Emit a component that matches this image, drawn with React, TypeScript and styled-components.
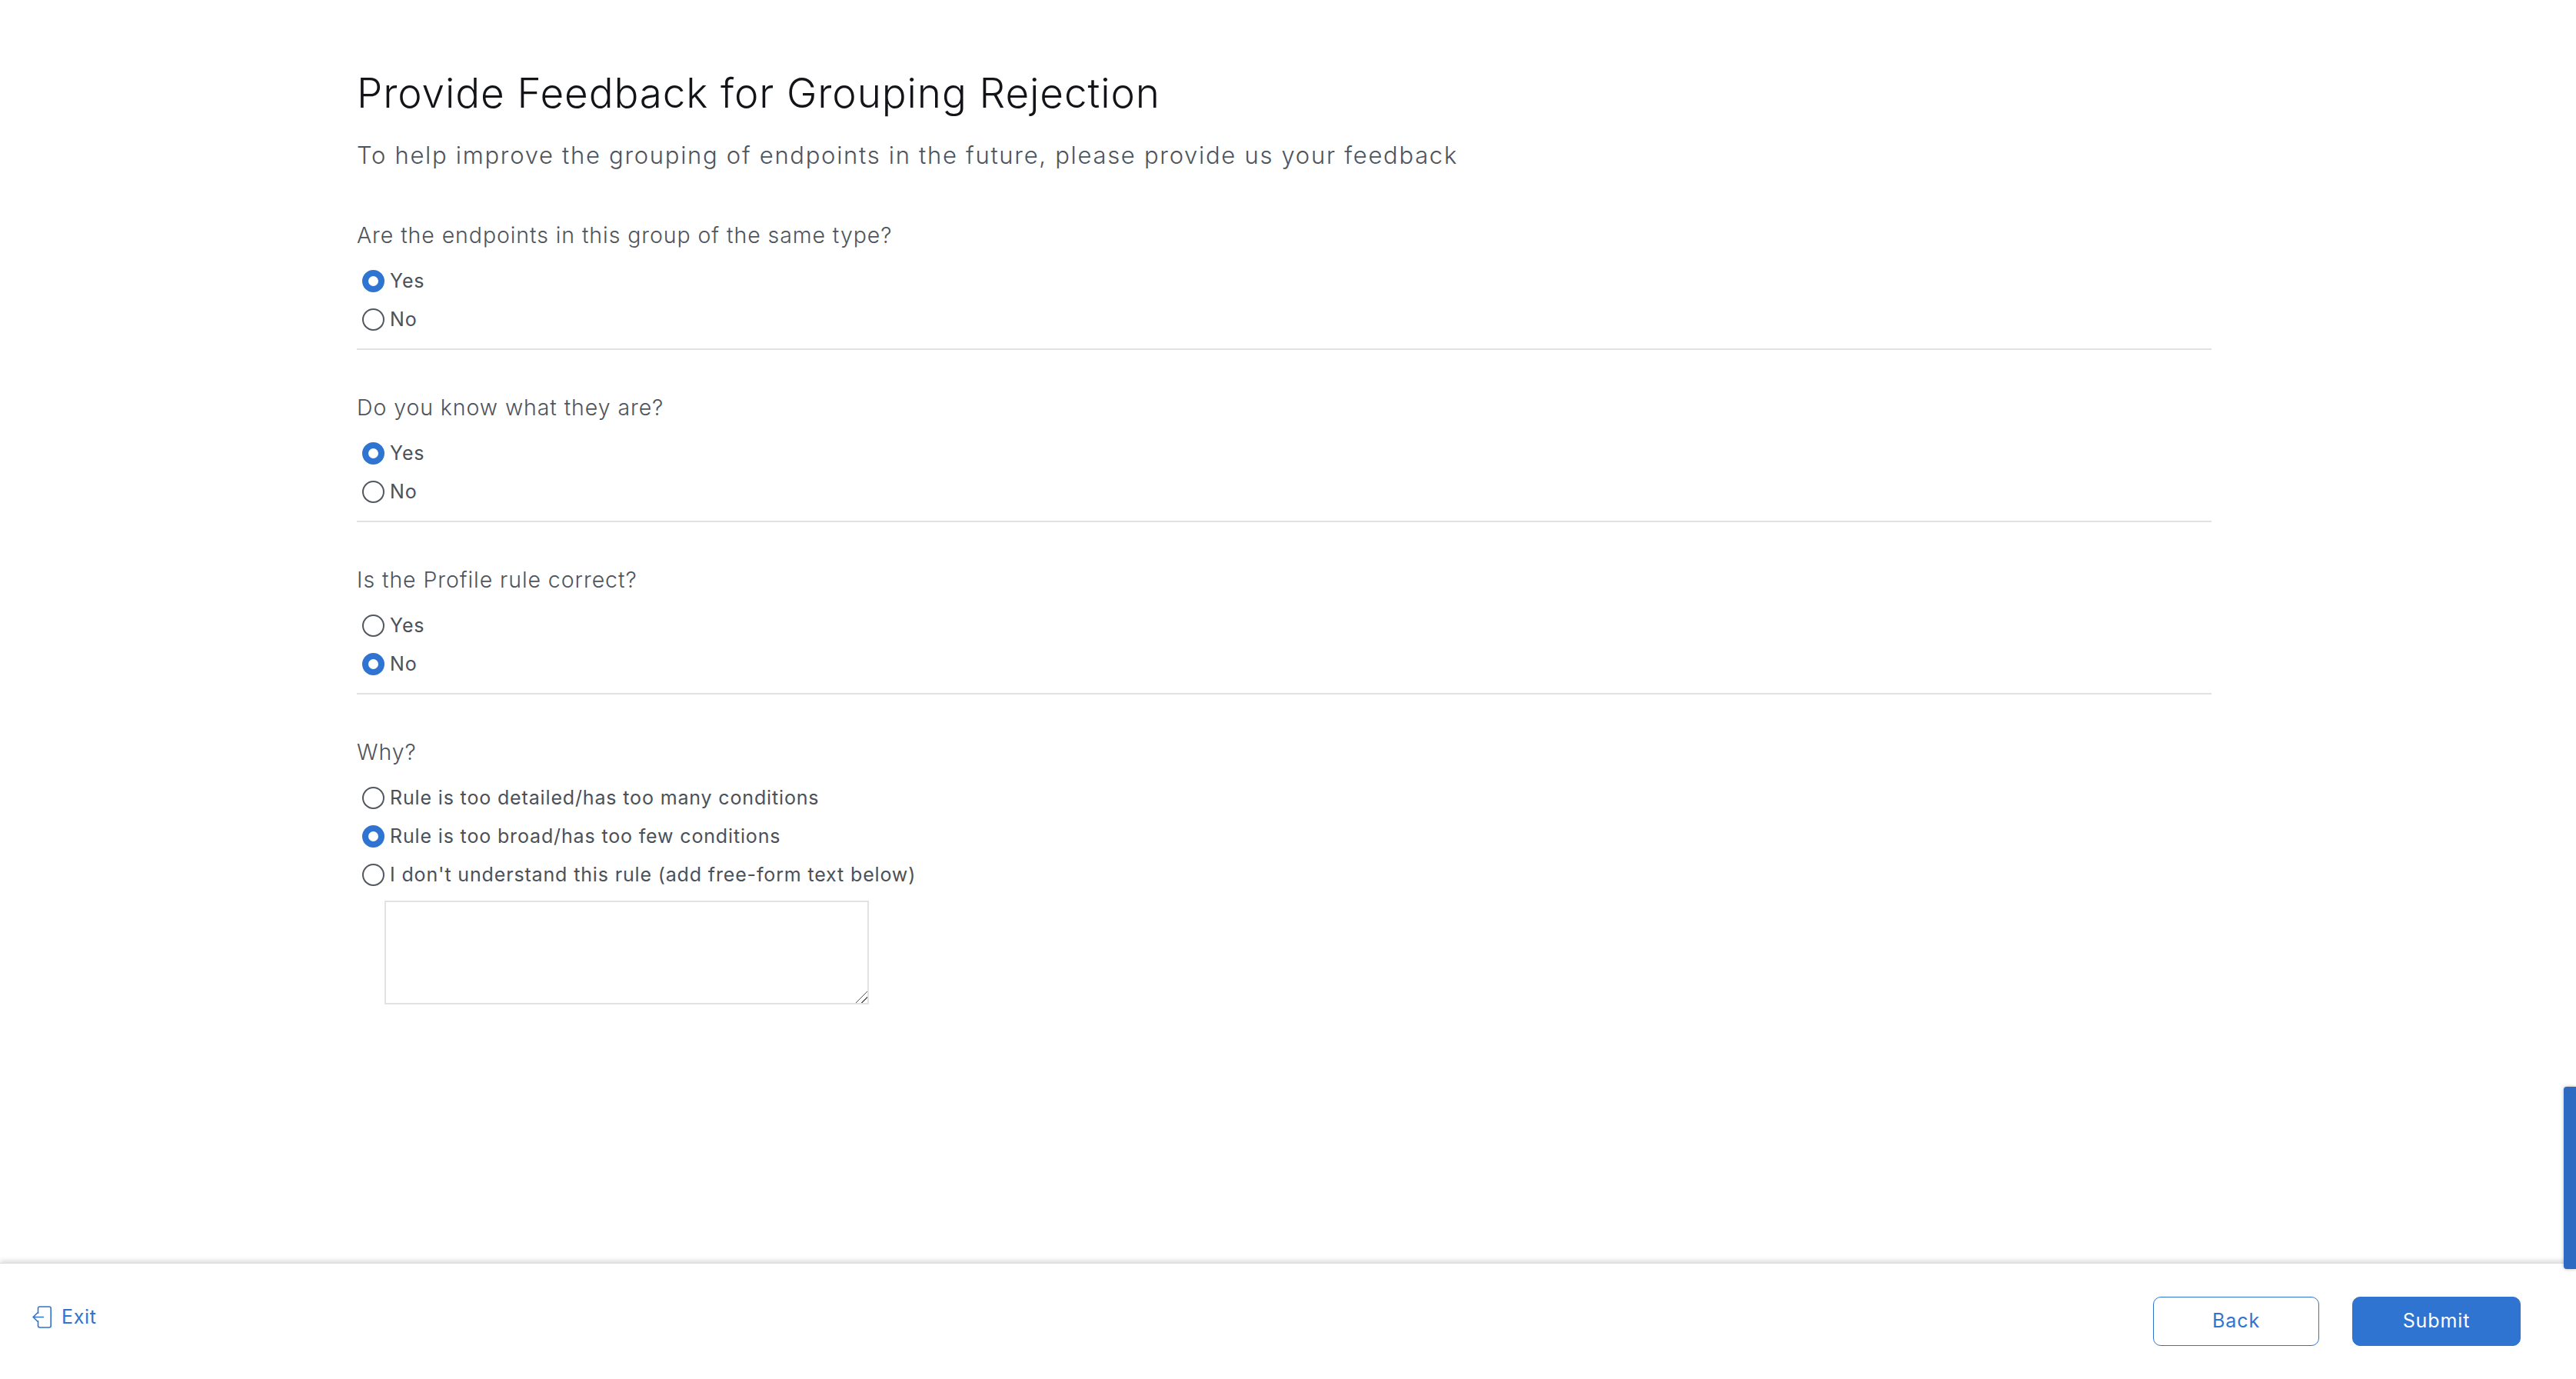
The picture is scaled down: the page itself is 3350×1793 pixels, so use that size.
import { FunctionComponent } from "react";
import styled, { createGlobalStyle } from "styled-components";

const GlobalStyle = createGlobalStyle`
  html, body {
    margin: 0;
    padding: 0;
    background: #fff;
  }
  body {
    font-family: Inter, "Noto Sans", "Liberation Sans", sans-serif;
    overflow: hidden;
  }
`;

const Page = styled.div`
  width: 3350px;
  height: 1793px;
  position: relative;
  display: flex;
  flex-direction: column;
  background: #fff;
  overflow: hidden;
`;
const Main = styled.main`
  flex: 1;
  width: 2412px;
  margin-left: 464px;
  padding-top: 86px;
  box-sizing: border-box;
`;
const Title = styled.h1`
  margin: 0;
  font-size: 53px;
  line-height: 70px;
  font-weight: 300;
  letter-spacing: 0.9px;
  color: #121417;
`;
const Subtitle = styled.p`
  margin: 26px 0 64px;
  font-size: 31px;
  line-height: 40px;
  font-weight: 300;
  letter-spacing: 1.7px;
  color: #4e545c;
`;
const Section = styled.section<{ $last?: boolean }>`
  display: flex;
  flex-direction: column;
  align-items: flex-start;
  box-sizing: border-box;
  height: ${(p) => (p.$last ? "auto" : "169px")};
  border-bottom: ${(p) => (p.$last ? "none" : "2px solid #e1e2e3")};
  margin-bottom: ${(p) => (p.$last ? "0" : "55px")};
`;
const Question = styled.div`
  font-size: 28.5px;
  line-height: 40px;
  font-weight: 300;
  letter-spacing: 0.92px;
  color: #4e545c;
  margin-bottom: 14px;
`;
const OptionRow = styled.label`
  display: flex;
  align-items: center;
  height: 50px;
  padding-left: 7px;
  gap: 7px;
  font-size: 25px;
  font-weight: 400;
  letter-spacing: 0.85px;
  color: #4b5159;
`;
const Radio = styled.input.attrs({ type: "radio" })`
  appearance: none;
  width: 29px;
  height: 29px;
  margin: 0;
  box-sizing: border-box;
  border-radius: 50%;
  border: 2px solid #53585f;
  background: #fff;
  &:checked {
    border: 8.5px solid #2f74d0;
  }
`;
const FreeText = styled.textarea`
  display: block;
  width: 630px;
  height: 135px;
  margin: 9px 0 0 36px;
  padding: 0;
  box-sizing: border-box;
  border: 2px solid #e1e2e3;
  border-radius: 0;
  outline: none;
  background: #fff;
  &::-webkit-resizer {
    background: linear-gradient(
      135deg,
      transparent 47%,
      #55585c 47%,
      #55585c 53%,
      transparent 53%,
      transparent 72%,
      #55585c 72%,
      #55585c 78%,
      transparent 78%
    );
  }
`;
const Footer = styled.footer`
  height: 151px;
  flex-shrink: 0;
  box-sizing: border-box;
  display: flex;
  justify-content: space-between;
  align-items: flex-start;
  padding: 43px 72px 0 42px;
  border-top: 1px solid #dcdcdc;
  box-shadow: 0 -3px 6px rgba(0, 0, 0, 0.14);
  background: #fff;
`;
const ExitLink = styled.a`
  display: flex;
  align-items: center;
  gap: 13px;
  margin-top: 11px;
  font-size: 25px;
  line-height: 30px;
  letter-spacing: 0.7px;
  color: #2f74d0;
`;
const Actions = styled.div`
  display: flex;
  gap: 43px;
`;
const Button = styled.button<{ $primary?: boolean }>`
  width: ${(p) => (p.$primary ? "219px" : "216px")};
  height: 64px;
  box-sizing: border-box;
  border-radius: 10px;
  border: 1px solid #2f74d0;
  background: ${(p) => (p.$primary ? "#2f74d0" : "#fff")};
  color: ${(p) => (p.$primary ? "#fff" : "#2f74d0")};
  font-family: inherit;
  font-size: 25px;
  font-weight: 400;
  letter-spacing: 0.9px;
  padding: 0 0 2px;
`;
const SideTab = styled.div`
  position: absolute;
  right: 0;
  top: 1413px;
  width: 16px;
  height: 237px;
  background: #2d6bc3;
  border-radius: 4px 0 0 4px;
  box-shadow: 0 0 4px rgba(0, 0, 0, 0.3);
`;

type QuestionData = {
  name: string;
  label: string;
  options: string[];
  selected: number;
};

const questions: QuestionData[] = [
  {
    name: "sameType",
    label: "Are the endpoints in this group of the same type?",
    options: ["Yes", "No"],
    selected: 0,
  },
  {
    name: "known",
    label: "Do you know what they are?",
    options: ["Yes", "No"],
    selected: 0,
  },
  {
    name: "correct",
    label: "Is the Profile rule correct?",
    options: ["Yes", "No"],
    selected: 1,
  },
  {
    name: "why",
    label: "Why?",
    options: [
      "Rule is too detailed/has too many conditions",
      "Rule is too broad/has too few conditions",
      "I don't understand this rule (add free-form text below)",
    ],
    selected: 1,
  },
];

const ExitIcon: FunctionComponent = () => (
  <svg width="25" height="29" viewBox="0 0 25 29" fill="none" stroke="currentColor" strokeWidth="1.6">
    <path d="M7.5 10V3.2C7.5 1.9 8.4 1 9.7 1H22C23.3 1 24.2 1.9 24.2 3.2V25.8C24.2 27.1 23.3 28 22 28H9.7C8.4 28 7.5 27.1 7.5 25.8V19" />
    <path d="M15 14.5H1.5M7 8.8L1.2 14.5L7 20.2" />
  </svg>
);

const App: FunctionComponent = () => {
  return (
    <Page>
      <GlobalStyle />
      <Main>
        <Title>Provide Feedback for Grouping Rejection</Title>
        <Subtitle>To help improve the grouping of endpoints in the future, please provide us your feedback</Subtitle>
        {questions.map((q, i) => {
          const last = i === questions.length - 1;
          return (
            <Section key={q.name} $last={last}>
              <Question>{q.label}</Question>
              {q.options.map((opt, j) => (
                <OptionRow key={opt}>
                  <Radio name={q.name} defaultChecked={j === q.selected} />
                  {opt}
                </OptionRow>
              ))}
              {last && <FreeText />}
            </Section>
          );
        })}
      </Main>
      <Footer>
        <ExitLink>
          <ExitIcon />
          Exit
        </ExitLink>
        <Actions>
          <Button>Back</Button>
          <Button $primary>Submit</Button>
        </Actions>
      </Footer>
      <SideTab />
    </Page>
  );
};

export default App;
